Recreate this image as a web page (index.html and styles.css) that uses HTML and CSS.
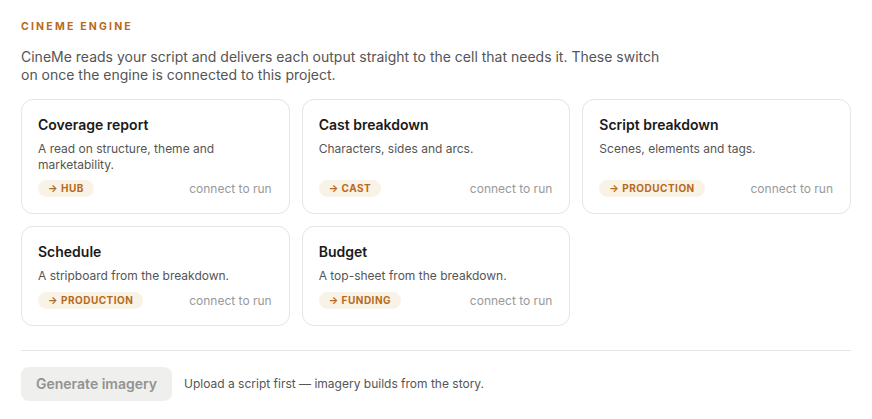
FILE: index.html
```html
<!DOCTYPE html>
<html lang="en">
<head>
<meta charset="UTF-8" />
<meta name="viewport" content="width=device-width, initial-scale=1" />
<title>CineMe Engine</title>
<link rel="stylesheet" href="styles.css">
</head>
<body>

<section class="engine" aria-label="CineMe engine">
  <h2 class="engine-label">CineMe Engine</h2>
  <p class="engine-intro">CineMe reads your script and delivers each output straight to the cell that needs it. These switch on once the engine is connected to this project.</p>

  <!-- Engine outputs -->
  <div class="outputs-grid">
    <div class="output-card">
      <h4>Coverage report</h4>
      <p class="output-desc">A read on structure, theme and marketability.</p>
      <div class="output-foot">
        <span class="cell-tag">&rarr; Hub</span>
        <span class="output-status">connect to run</span>
      </div>
    </div>
    <div class="output-card">
      <h4>Cast breakdown</h4>
      <p class="output-desc">Characters, sides and arcs.</p>
      <div class="output-foot">
        <span class="cell-tag">&rarr; Cast</span>
        <span class="output-status">connect to run</span>
      </div>
    </div>
    <div class="output-card">
      <h4>Script breakdown</h4>
      <p class="output-desc">Scenes, elements and tags.</p>
      <div class="output-foot">
        <span class="cell-tag">&rarr; Production</span>
        <span class="output-status">connect to run</span>
      </div>
    </div>
    <div class="output-card">
      <h4>Schedule</h4>
      <p class="output-desc">A stripboard from the breakdown.</p>
      <div class="output-foot">
        <span class="cell-tag">&rarr; Production</span>
        <span class="output-status">connect to run</span>
      </div>
    </div>
    <div class="output-card">
      <h4>Budget</h4>
      <p class="output-desc">A top-sheet from the breakdown.</p>
      <div class="output-foot">
        <span class="cell-tag">&rarr; Funding</span>
        <span class="output-status">connect to run</span>
      </div>
    </div>
  </div>

  <!-- Imagery action -->
  <div class="imagery-row">
    <button class="imagery-btn" disabled>Generate imagery</button>
    <span class="imagery-hint">Upload a script first &mdash; imagery builds from the story.</span>
  </div>
</section>

</body>
</html>
```

FILE: styles.css
```css
/* Reset */
* {
  box-sizing: border-box;
}
body {
  margin: 0;
  font-family: Inter, 'Noto Sans', sans-serif;
  background: #fff;
  color: #1c1c1c;
}

.engine {
  padding: 20px 21px;
}

/* Header */
.engine-label {
  margin: 0;
  font-size: 10.5px;
  line-height: 13px;
  font-weight: 700;
  letter-spacing: 2.2px;
  text-transform: uppercase;
  color: #b8691b;
}
.engine-intro {
  margin: 15px 0 0 0;
  max-width: 640px;
  font-size: 14px;
  line-height: 18px;
  color: #555;
}

/* Outputs grid */
.outputs-grid {
  display: grid;
  grid-template-columns: repeat(3, 1fr);
  column-gap: 12px;
  row-gap: 12px;
  margin-top: 15px;
}
.output-card {
  border: 1px solid #e4e4e4;
  border-radius: 12px;
  padding: 16px 17px 16px 16px;
  display: flex;
  flex-direction: column;
}
.output-card h4 {
  margin: 0 0 7px 0;
  font-size: 14px;
  line-height: 18px;
  font-weight: 600;
  color: #1a1a1a;
}
.output-desc {
  margin: 0;
  font-size: 12px;
  line-height: 15.5px;
  color: #555;
}
.output-foot {
  margin-top: auto;
  padding-top: 8px;
  display: flex;
  align-items: center;
  justify-content: space-between;
}
.cell-tag {
  display: inline-block;
  background: #f8f3e6;
  color: #b8691b;
  font-size: 10px;
  line-height: 17px;
  font-weight: 700;
  letter-spacing: 0.5px;
  text-transform: uppercase;
  padding: 0 10px;
  border-radius: 20px;
}
.output-status {
  font-size: 12px;
  color: #999;
}

/* Imagery row */
.imagery-row {
  margin-top: 24px;
  border-top: 1px solid #e6e6e6;
  padding-top: 16px;
  display: flex;
  align-items: center;
  gap: 12px;
}
.imagery-btn {
  font-family: inherit;
  font-size: 14px;
  font-weight: 600;
  color: #939393;
  background: #efefed;
  border: none;
  border-radius: 8px;
  padding: 0 15px;
  height: 34px;
}
.imagery-hint {
  font-size: 12px;
  color: #555;
}
```
